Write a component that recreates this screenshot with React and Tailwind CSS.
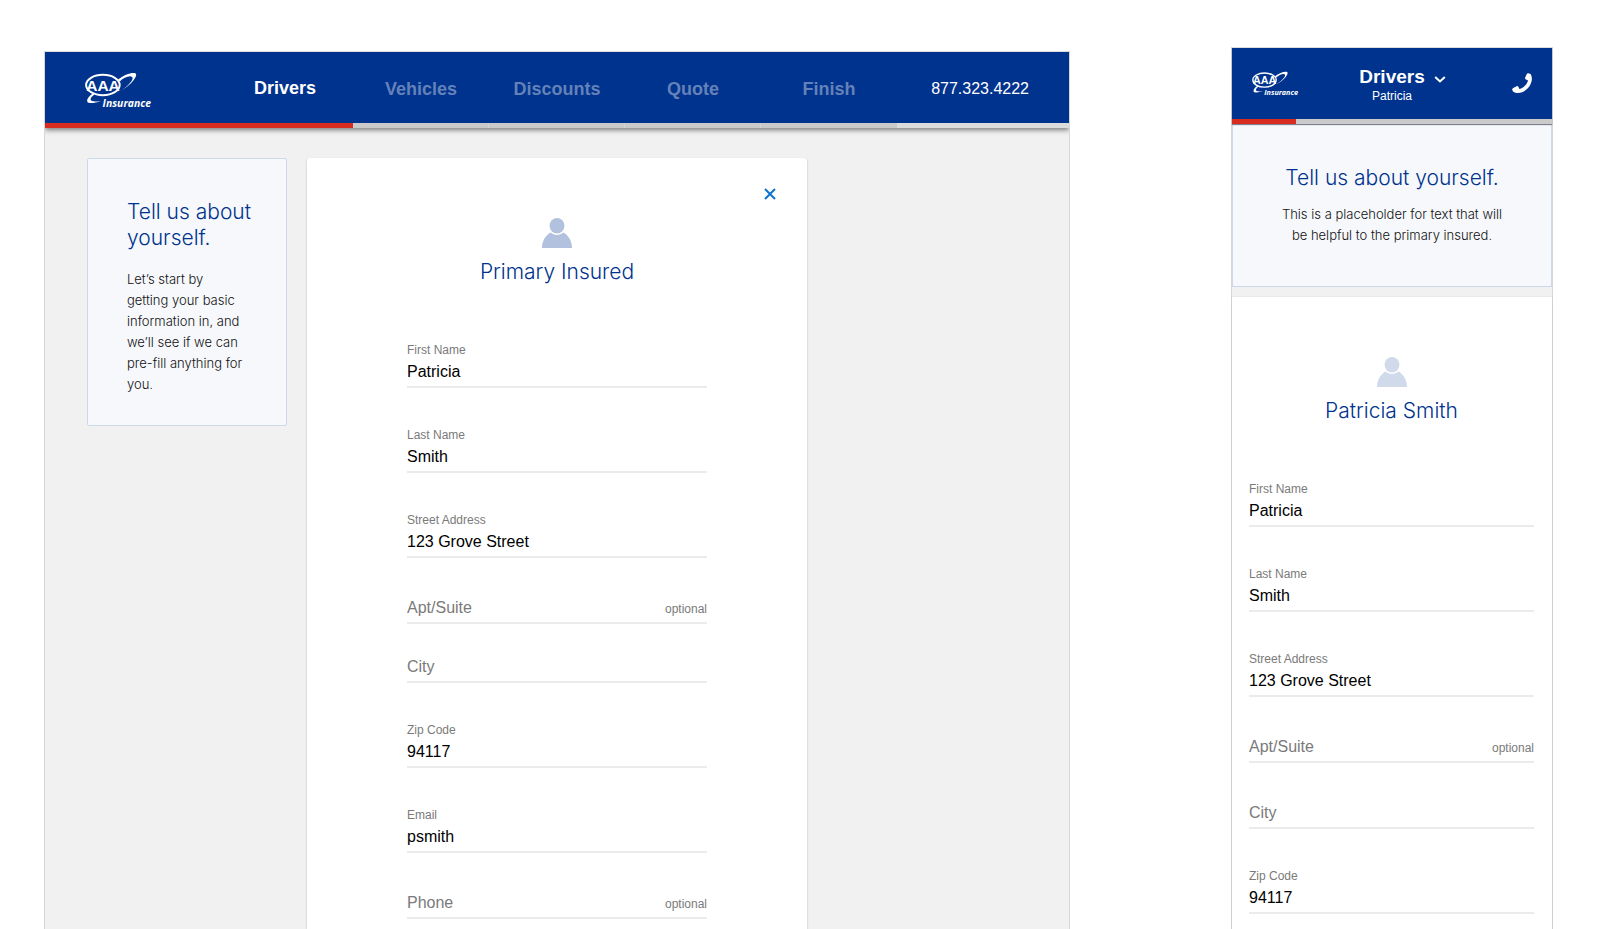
import React, { useId } from "react";

const steps = ["Drivers", "Vehicles", "Discounts", "Quote", "Finish"];

function Logo({ className }) {
  return (
    <svg viewBox="0 0 66 36" className={`overflow-visible ${className}`} role="img" aria-label="AAA Insurance">
      <ellipse cx="17.9" cy="13" rx="16.8" ry="10.2" fill="none" stroke="#fff" strokeWidth="2" />
      <text
        x="18"
        y="18.6"
        textAnchor="middle"
        fill="#fff"
        fontFamily="'Liberation Sans', sans-serif"
        fontWeight="700"
        fontSize="15.5"
      >
        AAA
      </text>
      <path
        d="M33 7.6 C38 3.6 45 0.8 49.3 1.1 C52.4 1.4 51.4 4.8 48.4 8.6 C44.8 13 39.6 17 34.4 19.6 C39.6 16.4 43.8 12.8 46.2 9.4 C48 6.8 48.2 4.8 45.8 4.4 C42.6 4 38 6.4 34.8 9.4 Z"
        fill="#fff"
      />
      <path
        d="M7.6 21.4 C3.4 24.6 1.6 27.4 2.2 29.4 C3.2 32 9.6 31.2 16 28.9 C10.4 29.8 6.2 29.6 5.6 27.8 C5.2 26.2 6.8 24.2 9.4 22.4 Z"
        fill="#fff"
      />
      <text x="17.6" y="34.8" fill="#fff" fontFamily="'Open Sans', sans-serif" fontStyle="italic" fontWeight="700" fontSize="10.4">
        Insurance
      </text>
    </svg>
  );
}

function PersonIcon({ className }) {
  return (
    <svg viewBox="0 0 30 30" className={className} fill="currentColor" aria-hidden="true">
      <ellipse cx="15" cy="7.8" rx="7.4" ry="7.8" />
      <path d="M8.8 14.6 C10.4 16.2 12.6 17.1 15 17.1 C17.4 17.1 19.6 16.2 21.2 14.6 C26.4 17.2 30 23 30 30 L0 30 C0 23 3.6 17.2 8.8 14.6 Z" />
    </svg>
  );
}

function HandsetIcon({ className }) {
  return (
    <svg viewBox="0 0 20 20" className={className} fill="currentColor" aria-hidden="true">
      <path d="M16.3 0.2 L18.6 1 C19.6 3 20 4.5 19.8 7 C18.8 14.5 12.5 19.6 6 20 C4 20.1 2.5 19.8 1 18.6 L0.2 16.8 C0 16 0.5 15.3 1.2 14.9 L4.6 13.2 C5.4 12.9 6.2 13.1 6.5 13.9 L7.2 15.4 C7.4 15.9 8 16 8.4 15.8 C12 14.2 14.6 11.6 15.8 8.3 C16 7.7 15.8 7.3 15.3 7.1 L14 6.5 C13.1 6.1 12.8 5.3 13.2 4.5 L14.8 1 C15.1 0.3 15.7 0 16.3 0.2 Z" />
    </svg>
  );
}

function Field({ label, value, optional, type = "text", className = "mt-[38px]" }) {
  const id = useId();
  if (value) {
    return (
      <div className={className}>
        <label htmlFor={id} className="mb-px block text-xs leading-[18px] text-[#7a7a7a]">
          {label}
        </label>
        <input
          id={id}
          type={type}
          defaultValue={value}
          className="block h-7 w-full border-b-2 border-[#ebebeb] bg-transparent pb-0.5 text-base text-black outline-none"
        />
      </div>
    );
  }
  return (
    <div className={`flex items-baseline border-b-2 border-[#ebebeb] pb-0.5 text-[#7a7a7a] ${className}`}>
      <label htmlFor={id} className="text-base leading-6">
        {label}
      </label>
      <input id={id} type={type} className="h-6 min-w-0 flex-1 bg-transparent text-base text-black outline-none" />
      {optional && <span className="text-xs">optional</span>}
    </div>
  );
}

function Title({ children, className = "" }) {
  return (
    <h2 className={`font-[Inter,'Liberation_Sans',sans-serif] text-[21px] leading-[26px] font-light text-[#00338d] ${className}`}>
      {children}
    </h2>
  );
}

function Copy({ children, className = "" }) {
  return (
    <p className={`font-[Inter,'Liberation_Sans',sans-serif] text-[13px] leading-[21px] font-light text-[#111] ${className}`}>
      {children}
    </p>
  );
}

function DesktopView() {
  return (
    <section className="mt-[51px] flex max-w-[1026px] flex-1 flex-col overflow-hidden border-x border-t border-x-[#d6d6d6] border-t-[#dcdcdc] bg-[#f1f1f1]">
      <header className="relative shadow-[0_2px_5px_rgba(0,0,0,0.5)]">
        <div className="grid h-[71px] grid-cols-[172fr_repeat(5,136fr)_172fr] items-center bg-[#00338d]">
          <Logo className="mt-1 ml-10 h-9 w-[66px]" />
          {steps.map((step, i) => (
            <a
              key={step}
              href="#"
              className={`text-center text-lg font-bold ${i === 0 ? "text-white" : "pt-0.5 text-[#6482b9]"}`}
            >
              {step}
            </a>
          ))}
          <a href="tel:8773234222" className="pt-0.5 pr-10 text-right text-base text-white">
            877.323.4222
          </a>
        </div>
        <div className="grid h-[5px] grid-cols-[308fr_repeat(4,136fr)_172fr] bg-[#dcdcdc]">
          <div className="bg-[#d82c20]" />
          <div className="border-r border-[#d2d2d2] bg-[#cacaca]" />
          <div className="border-r border-[#d2d2d2] bg-[#cacaca]" />
          <div className="border-r border-[#d2d2d2] bg-[#cacaca]" />
          <div className="bg-[#cacaca]" />
        </div>
      </header>
      <div className="grid flex-1 grid-cols-[1fr_500px_1fr] pt-[30px]">
        <aside className="mr-5 w-[200px] self-start justify-self-end rounded-[2px] border border-[#cdd8ec] bg-[#f6f8fc] pt-10 pr-7 pb-[30px] pl-[39px]">
          <Title>Tell us about yourself.</Title>
          <Copy className="mt-[18px] max-w-[118px]">
            Let’s start by getting your basic information in, and we’ll see if we can pre-fill anything for you.
          </Copy>
        </aside>
        <main className="relative rounded-t-[3px] bg-white shadow-[0_1px_2px_rgba(0,0,0,0.3)]">
          <button type="button" aria-label="Close" className="absolute top-[23px] right-6 p-[7px] text-[#0b74d1]">
            <svg viewBox="0 0 12 12" className="size-3" fill="none" stroke="currentColor" strokeWidth="2">
              <path d="M1 1 L11 11 M11 1 L1 11" />
            </svg>
          </button>
          <div className="mx-auto w-[300px] pt-[60px]">
            <PersonIcon className="mx-auto size-[30px] text-[#b2c1dd]" />
            <Title className="mt-[11px] text-center">Primary Insured</Title>
            <form>
              <Field label="First Name" value="Patricia" className="mt-14" />
              <Field label="Last Name" value="Smith" />
              <Field label="Street Address" value="123 Grove Street" />
              <Field label="Apt/Suite" optional />
              <Field label="City" className="mt-[31px]" />
              <Field label="Zip Code" value="94117" />
              <Field label="Email" value="psmith" />
              <Field label="Phone" type="tel" optional />
            </form>
          </div>
        </main>
      </div>
    </section>
  );
}

function MobileView() {
  return (
    <section className="mt-[47px] flex w-[322px] shrink-0 flex-col border-x border-t border-x-[#d6d6d6] border-t-[#dcdcdc] bg-[#f1f1f1]">
      <header className="relative shadow-[0_1px_1px_rgba(0,0,0,0.4)]">
        <div className="grid h-[71px] grid-cols-[1fr_auto_1fr] items-center bg-[#00338d] px-5 text-white">
          <Logo className="h-[25px] w-[46px]" />
          <button type="button" className="relative flex flex-col items-center pt-1">
            <span className="text-[19px] leading-5 font-bold">Drivers</span>
            <span className="text-xs leading-[18px]">Patricia</span>
            <svg viewBox="0 0 12 7" className="absolute top-[13px] -right-[21px] h-[7px] w-3" fill="none" stroke="currentColor" strokeWidth="2">
              <path d="M1.2 1 L6 5.4 L10.8 1" />
            </svg>
          </button>
          <a href="tel:8773234222" aria-label="Call" className="justify-self-end pb-0.5">
            <HandsetIcon className="size-5" />
          </a>
        </div>
        <div className="h-[5px] bg-[#cacaca]">
          <div className="h-full w-1/5 bg-[#d82c20]" />
        </div>
      </header>
      <div className="border border-[#cdd8ec] bg-[#f6f8fc] py-10 text-center">
        <Title>Tell us about yourself.</Title>
        <Copy className="mx-auto mt-[13px] max-w-[230px]">
          This is a placeholder for text that will be helpful to the primary insured.
        </Copy>
      </div>
      <div className="mt-[10px] flex-1 bg-white pt-[60px] pr-[18px] pl-[17px] shadow-[0_0_1px_rgba(0,0,0,0.2)]">
        <PersonIcon className="mx-auto size-[30px] text-[#d0daeb]" />
        <Title className="mt-[11px] text-center">Patricia Smith</Title>
        <form>
          <Field label="First Name" value="Patricia" className="mt-14" />
          <Field label="Last Name" value="Smith" />
          <Field label="Street Address" value="123 Grove Street" />
          <Field label="Apt/Suite" optional />
          <Field label="City" />
          <Field label="Zip Code" value="94117" />
        </form>
      </div>
    </section>
  );
}

export default function App() {
  return (
    <div className="flex min-h-screen justify-between gap-10 bg-white pr-[63px] pl-11 font-['Liberation_Sans',Arial,sans-serif]">
      <DesktopView />
      <MobileView />
    </div>
  );
}
